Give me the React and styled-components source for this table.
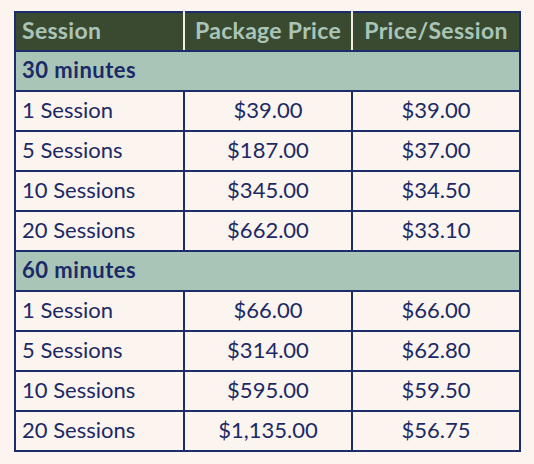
import styled, { createGlobalStyle } from 'styled-components';

const GlobalStyle = createGlobalStyle`
  html, body {
    margin: 0;
    background: #fcf4ee;
  }
  body {
    font-family: Lato, "Open Sans", sans-serif;
  }
`;

const groups = [
  {
    title: '30 minutes',
    rows: [
      ['1 Session', '$39.00', '$39.00'],
      ['5 Sessions', '$187.00', '$37.00'],
      ['10 Sessions', '$345.00', '$34.50'],
      ['20 Sessions', '$662.00', '$33.10'],
    ],
  },
  {
    title: '60 minutes',
    rows: [
      ['1 Session', '$66.00', '$66.00'],
      ['5 Sessions', '$314.00', '$62.80'],
      ['10 Sessions', '$595.00', '$59.50'],
      ['20 Sessions', '$1,135.00', '$56.75'],
    ],
  },
];

function App() {
  return (
    <Page>
      <GlobalStyle />
      <Table>
        <colgroup>
          <col style={{ width: 169 }} />
          <col style={{ width: 168 }} />
          <col style={{ width: 168 }} />
        </colgroup>
        <thead>
          <tr>
            <Th>Session</Th>
            <Th $center>Package Price</Th>
            <Th $center>Price/Session</Th>
          </tr>
        </thead>
        <tbody>
          {groups.map(g => (
            <Group key={g.title} group={g} />
          ))}
        </tbody>
      </Table>
    </Page>
  );
}

function Group({ group }) {
  return (
    <>
      <tr>
        <GroupCell colSpan={3}>{group.title}</GroupCell>
      </tr>
      {group.rows.map(r => (
        <tr key={r[0]}>
          <Td>{r[0]}</Td>
          <Td $center>{r[1]}</Td>
          <Td $center>{r[2]}</Td>
        </tr>
      ))}
    </>
  );
}

export default App;

const Page = styled.div`
  padding: 11px 0 0 14px;
`;

const Table = styled.table`
  border-collapse: collapse;
  table-layout: fixed;
  width: 503px;
  border: 2px solid #1d2d6b;
  color: #1b2a66;
  font-size: 22px;
  line-height: 1.2;
`;

const Th = styled.th`
  height: 35px;
  padding: 0 6px 2px;
  background: #3a4a30;
  color: #a9c5b8;
  font-size: 23px;
  font-weight: 700;
  letter-spacing: 0.3px;
  text-align: ${p => (p.$center ? 'center' : 'left')};
  border-left: 2px solid #f3ece0;
  border-bottom: 2px solid #1d2d6b;
  &:first-child {
    border-left: none;
  }
`;

const GroupCell = styled.td`
  height: 36px;
  padding: 0 6px 2px;
  background: #a9c5b8;
  font-weight: 700;
  letter-spacing: 0.5px;
  border: 2px solid #1d2d6b;
`;

const Td = styled.td`
  height: 36px;
  padding: 0 6px 2px;
  text-align: ${p => (p.$center ? 'center' : 'left')};
  border: 2px solid #1d2d6b;
`;
